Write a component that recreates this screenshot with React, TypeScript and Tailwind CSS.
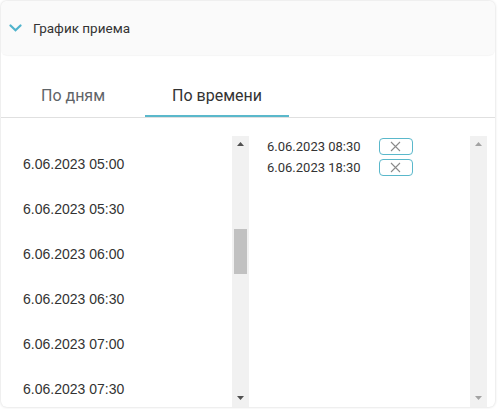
import React from "react";

const left = ["05:00", "05:30", "06:00", "06:30", "07:00", "07:30"];
const right = ["08:30", "18:30"];

function Scrollbar({ disabled, thumb }: { disabled?: boolean; thumb?: boolean }) {
  const arrow = disabled ? "#a3a3a3" : "#505050";
  return (
    <div className="relative h-full w-[17px] shrink-0 bg-[#f1f1f1]">
      <svg className="absolute left-[5px] top-[6px]" width="7" height="4" viewBox="0 0 7 4">
        <path d="M0 4 L3.5 0 L7 4 Z" fill={arrow} />
      </svg>
      {thumb && <div className="absolute left-[2px] top-[93px] h-[45px] w-[13px] bg-[#c1c1c1]" />}
      <svg className="absolute left-[5px] bottom-[7px]" width="7" height="4" viewBox="0 0 7 4">
        <path d="M0 0 L7 0 L3.5 4 Z" fill={arrow} />
      </svg>
    </div>
  );
}

export default function App() {
  return (
    <div className="h-[409px] w-[498px] bg-white pl-[1px] pt-[1px]">
      <div className="flex h-[406px] w-[494px] flex-col overflow-hidden rounded-md bg-white shadow-[0_0_3px_rgba(0,0,0,0.18)]">
        <div className="flex h-[54px] shrink-0 items-center gap-[11px] rounded-md bg-[#fafafa] pl-[8px] shadow-[0_1px_1px_rgba(0,0,0,0.04)]">
          <svg width="13" height="8" viewBox="0 0 13 8">
            <polyline points="1.5,1.5 6.5,6.3 11.5,1.5" fill="none" stroke="#4fb3cc" strokeWidth="2.2" strokeLinecap="round" />
          </svg>
          <span className="text-[13.5px] text-[#333] [font-family:Roboto,sans-serif]">График приема</span>
        </div>

        <div className="mt-[21px] flex border-b border-[#e0e0e0] [font-family:Roboto,sans-serif]">
          <div className="flex h-[41px] w-[144px] items-center justify-center border-b-2 border-transparent text-[16px] text-[#5f6468]">
            По дням
          </div>
          <div className="flex h-[41px] w-[144px] items-center justify-center border-b-2 border-[#5ab8cb] text-[16px] text-[#333]">
            По времени
          </div>
        </div>

        <div className="mt-[18px] flex min-h-0 flex-1 text-[#333]">
          <div className="flex w-[248px] shrink-0">
            <div className="flex-1 overflow-hidden pl-[22px] pt-[6px] text-[14px] [font-family:'Liberation_Sans',Arial,sans-serif]">
              {left.map((t) => (
                <div key={t} className="flex h-[45px] items-center">
                  6.06.2023 {t}
                </div>
              ))}
            </div>
            <Scrollbar thumb />
          </div>
          <div className="flex flex-1 pr-[8px]">
            <div className="flex-1 pl-[18px] text-[13px] [font-family:Roboto,sans-serif]">
              {right.map((t) => (
                <div key={t} className="flex h-[21px] items-center gap-[18px]">
                  <span>6.06.2023 {t}</span>
                  <button className="flex h-[17px] w-[34px] items-center justify-center rounded-[4px] border border-[#5ab8cb] bg-white">
                    <svg width="11" height="11" viewBox="0 0 11 11">
                      <path d="M1 1 L10 10 M10 1 L1 10" stroke="#8a8a8a" strokeWidth="1.1" />
                    </svg>
                  </button>
                </div>
              ))}
            </div>
            <Scrollbar disabled />
          </div>
        </div>
      </div>
    </div>
  );
}
